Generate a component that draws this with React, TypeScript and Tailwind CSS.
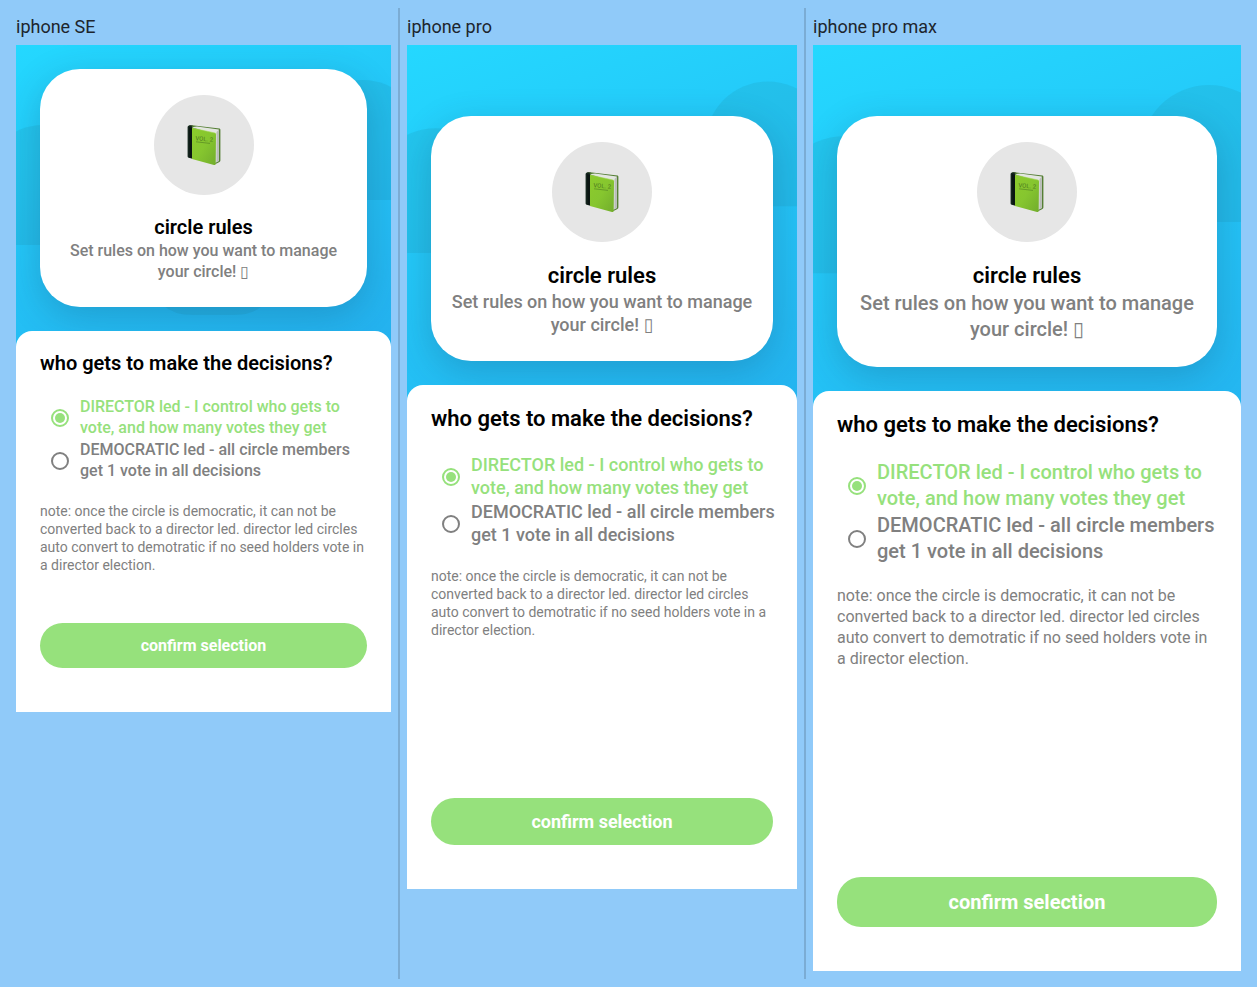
import { useState } from "react";

type Device = {
  id: string;
  name: string;
  screen: string;
  cardTop: string;
  title: string;
  body: string;
  note: string;
};

const devices: Device[] = [
  {
    id: "se",
    name: "iphone SE",
    screen: "aspect-[375/667]",
    cardTop: "pt-6",
    title: "text-[20px] leading-[26px]",
    body: "text-[16px] leading-[21px]",
    note: "text-[14px] leading-[18px]",
  },
  {
    id: "pro",
    name: "iphone pro",
    screen: "aspect-[390/844]",
    cardTop: "pt-[71px]",
    title: "text-[22px] leading-[29px]",
    body: "text-[18px] leading-[23px]",
    note: "text-[14px] leading-[18px]",
  },
  {
    id: "max",
    name: "iphone pro max",
    screen: "aspect-[428/926]",
    cardTop: "pt-[71px]",
    title: "text-[22px] leading-[29px]",
    body: "text-[20px] leading-[26px]",
    note: "text-[16px] leading-[21px]",
  },
];

const options = [
  { value: "director", lines: ["DIRECTOR led - I control who gets to", "vote, and how many votes they get"] },
  { value: "democratic", lines: ["DEMOCRATIC led - all circle members", "get 1 vote in all decisions"] },
];

function GreenBook({ id }: { id: string }) {
  return (
    <svg viewBox="0 0 34 41" className="h-[41px] w-[34px]" aria-hidden="true">
      <defs>
        <linearGradient id={`cover-${id}`} x1="0" y1="0" x2="1" y2="1">
          <stop offset="0" stopColor="#8ccb2c" />
          <stop offset="0.5" stopColor="#86c62f" />
          <stop offset="1" stopColor="#72ad2c" />
        </linearGradient>
      </defs>
      <path d="M2 0.6 Q3 0 5 0.3 L32.6 3.6 Q33.4 3.8 33.4 4.8 V35.6 Q33.4 37 32 37.2 L28.5 39 L4 3Z" fill="#557f35" />
      <path d="M4.5 2.2 L10 1.6 L31.8 4.5 V36 L28 38 L27 9Z" fill="#e3e6e0" />
      <path d="M29.6 7 L31.8 4.8 V36 L29.4 37.6Z" fill="#b9bdb9" />
      <path d="M0.6 1.8 Q1 0.3 3 0.3 L6 0.7 L4.6 1.6 L6 3.2 L5.6 33.8 L1.6 32.8 Q0.6 32.5 0.6 31.6Z" fill="#14251d" />
      <path d="M2 2 L5 2.9 L4.8 33.2 L2.6 32.4Z" fill="#0a1512" />
      <path d="M5 3 L28 8 Q29 8.2 29 9.4 L28.7 39 Q28.6 40.4 27 40 L5 34Z" fill={`url(#cover-${id})`} />
      <path d="M5 3 L28 8 Q29 8.2 29 9.4" fill="none" stroke="#a5d956" strokeWidth="0.6" />
      <text x="8.4" y="15.2" fontSize="6" transform="rotate(5 8 14)" fill="#4b771f" fontFamily="Roboto, sans-serif">
        VOL. 2
      </text>
      <path d="M9 16.8 L23 18.4" stroke="#568623" strokeWidth="0.7" />
    </svg>
  );
}

function Petals() {
  return (
    <svg viewBox="0 0 375 667" className="absolute inset-x-0 top-0 w-full" aria-hidden="true">
      <g fill="#1a6070" fillOpacity="0.1">
        <path d="M287 95 A60 60 0 0 1 407 95 V155 H347 A60 60 0 0 1 287 95Z" />
        <path d="M-33 140 A60 60 0 0 1 87 140 A60 60 0 0 1 27 200 H-33Z" />
        <path d="M137 150 H257 V230 Q257 270 217 270 H177 Q137 270 137 230Z" />
      </g>
    </svg>
  );
}

function Phone({ device }: { device: Device }) {
  const [choice, setChoice] = useState("director");
  return (
    <section className="min-w-0 pb-2">
      <h2 className="py-2 text-[18px] leading-[21px] text-[#1d252d]">{device.name}</h2>
      <div
        className={`relative flex flex-col overflow-hidden bg-linear-[160deg] from-[#24d8ff] from-0% to-[#24b0ee] to-55% ${device.screen}`}
      >
        <Petals />
        <div className={`relative px-6 pb-6 ${device.cardTop}`}>
          <div className="flex flex-col items-center rounded-[40px] bg-white pt-[26px] pb-[25px] text-center shadow-[0_10px_36px_rgba(20,60,90,0.24)]">
            <div className="flex size-[100px] items-center justify-center rounded-full bg-[#e6e6e6]">
              <GreenBook id={device.id} />
            </div>
            <h3 className={`mt-[19px] font-semibold text-black ${device.title}`}>circle rules</h3>
            <p className={`px-4 font-medium text-[#808080] ${device.body}`}>
              Set rules on how you want to manage
              <br />
              your circle! <span className="font-['DejaVu_Sans']">▯</span>
            </p>
          </div>
        </div>
        <form
          className="relative flex flex-1 flex-col rounded-t-2xl bg-white px-6 pt-[19px] pb-11"
          onSubmit={(event) => event.preventDefault()}
        >
          <fieldset>
            <legend className={`font-semibold text-black ${device.title}`}>who gets to make the decisions?</legend>
            <div className="pt-5">
              {options.map((option) => (
                <label
                  key={option.value}
                  className={`flex cursor-pointer font-medium text-[#808080] has-checked:text-[#96e17c] ${device.body}`}
                >
                  <input
                    type="radio"
                    name={`leadership-${device.id}`}
                    value={option.value}
                    checked={choice === option.value}
                    onChange={() => setChoice(option.value)}
                    className="mx-[11px] size-[18px] shrink-0 appearance-none self-center rounded-full border-2 border-current bg-clip-content p-[2px] checked:bg-current"
                  />
                  <span className="pb-px whitespace-nowrap">
                    {option.lines[0]}
                    <br />
                    {option.lines[1]}
                  </span>
                </label>
              ))}
            </div>
          </fieldset>
          <p className={`pt-5 text-[#808080] ${device.note}`}>
            note: once the circle is democratic, it can not be converted back to a director led. director led circles
            auto convert to demotratic if no seed holders vote in a director election.
          </p>
          <button
            type="submit"
            className={`mt-auto rounded-3xl bg-[#96e17c] py-3 font-bold text-white ${device.body}`}
          >
            confirm selection
          </button>
        </form>
      </div>
    </section>
  );
}

export default function App() {
  const [se, pro, max] = devices;
  return (
    <main className="min-h-screen bg-[#90caf9] px-4 py-2 font-['Roboto',sans-serif]">
      <div className="grid gap-x-[7px] md:grid-cols-[375fr_2px_390fr_2px_428fr]">
        <Phone device={se} />
        <div className="hidden bg-[#7bacd4] md:block" />
        <Phone device={pro} />
        <div className="hidden bg-[#7bacd4] md:block" />
        <Phone device={max} />
      </div>
    </main>
  );
}
